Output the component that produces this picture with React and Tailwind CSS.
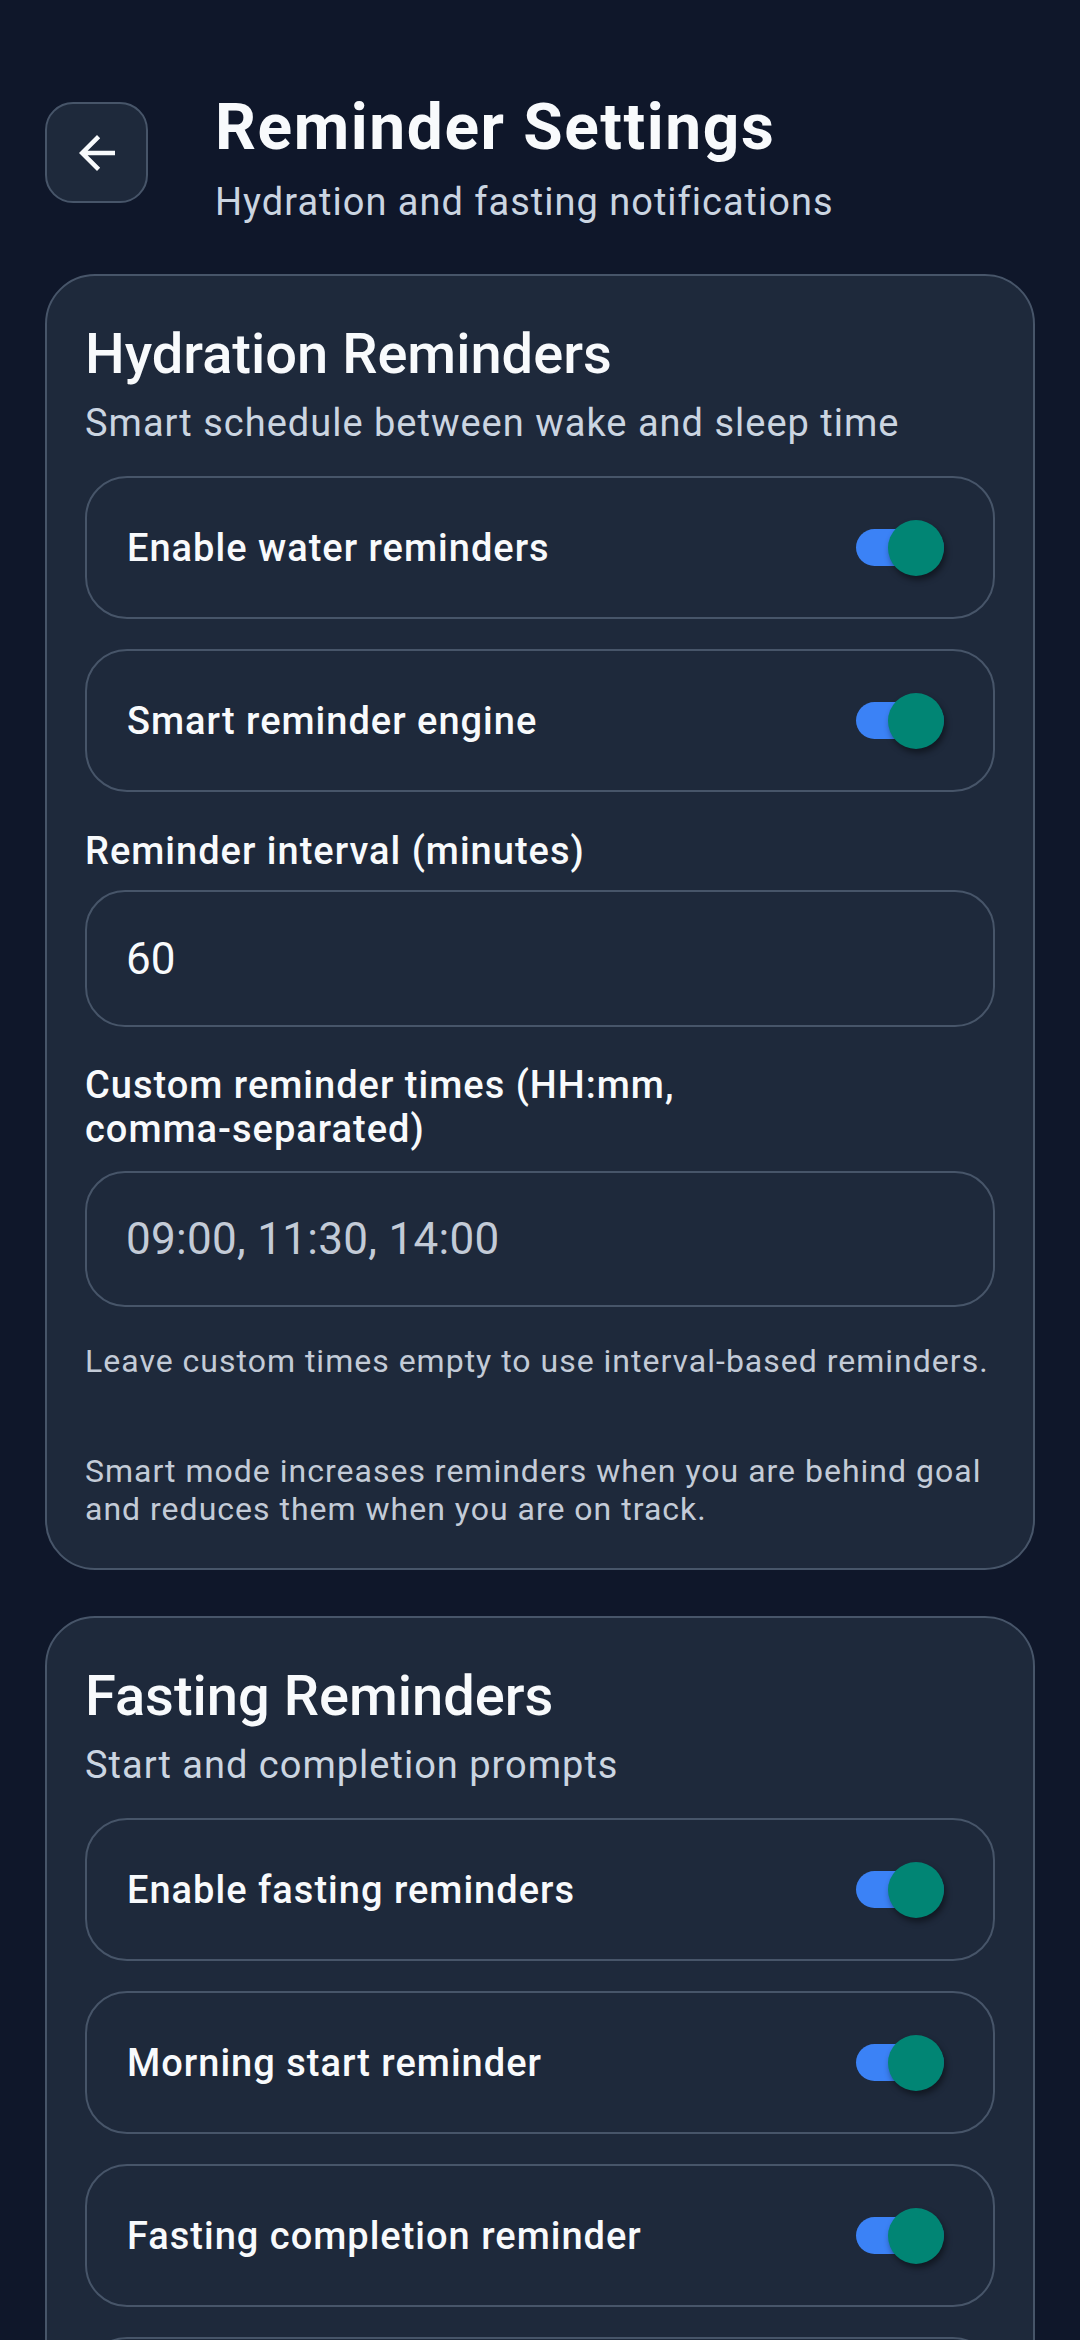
import React, { useState } from "react";

const ArrowBack = () => (
  <svg width="54" height="54" viewBox="0 0 24 24" fill="#f8fafc">
    <path d="M20 11H7.83l5.59-5.59L12 4l-8 8 8 8 1.41-1.41L7.83 13H20v-2z" />
  </svg>
);

const Toggle = ({ on, onChange }) => {
  return (
    <button
      onClick={() => onChange(!on)}
      className="relative w-[88px] h-[56px] flex items-center shrink-0"
    >
      <span
        className={
          on
            ? "block w-[88px] h-[37px] rounded-full bg-[#3b82f6]"
            : "block w-[88px] h-[37px] rounded-full bg-[#475569]"
        }
      />
      <span
        className={
          on
            ? "absolute right-0 top-0 w-[56px] h-[56px] rounded-full bg-[#018574] shadow-[2px_4px_6px_rgba(0,0,0,0.45)]"
            : "absolute left-0 top-0 w-[56px] h-[56px] rounded-full bg-[#e2e8f0] shadow-[2px_4px_6px_rgba(0,0,0,0.45)]"
        }
      />
    </button>
  );
};

const ToggleRow = ({ label, on, onChange }) => {
  return (
    <div className="h-[143px] rounded-[42px] border-2 border-[#475569] flex items-center justify-between pl-[40px] pr-[49px]">
      <p className="text-[38px] leading-[48px] tracking-[1px] font-medium text-[#f8fafc]">{label}</p>
      <Toggle on={on} onChange={onChange} />
    </div>
  );
};

const CardHeader = ({ title, subtitle }) => (
  <>
    <h2 className="text-[56px] leading-[68px] font-medium text-[#f8fafc]">{title}</h2>
    <p className="mt-[11px] text-[38px] leading-[48px] tracking-[1px] text-[#cbd5e1]">{subtitle}</p>
  </>
);

const App = () => {
  const [water, setWater] = useState(true);
  const [smart, setSmart] = useState(true);
  const [interval, setInterval] = useState("60");
  const [times, setTimes] = useState("");
  const [fasting, setFasting] = useState(true);
  const [morning, setMorning] = useState(true);
  const [completion, setCompletion] = useState(true);
  const [windowEnd, setWindowEnd] = useState(true);

  return (
    <div className="w-[1080px] h-[2340px] overflow-hidden bg-[#0f172a] font-['Roboto',sans-serif] px-[45px] pt-[90px]">
      {/* top bar */}
      <div className="flex items-start">
        <button className="mt-[12px] w-[103px] h-[101px] rounded-[28px] border-2 border-[#475569] bg-[#1e293b] flex items-center justify-center shrink-0">
          <ArrowBack />
        </button>
        <div className="ml-[67px]">
          <h1 className="text-[64px] leading-[76px] tracking-[1.6px] font-bold text-[#f8fafc]">Reminder Settings</h1>
          <p className="mt-[12px] text-[38px] leading-[48px] tracking-[1px] text-[#cbd5e1]">
            Hydration and fasting notifications
          </p>
        </div>
      </div>

      {/* hydration */}
      <section className="mt-[48px] rounded-[50px] border-2 border-[#475569] bg-[#1e293b] px-[38px] pt-[44px] pb-[40px]">
        <CardHeader
          title="Hydration Reminders"
          subtitle="Smart schedule between wake and sleep time"
        />
        <div className="mt-[29px] flex flex-col gap-[30px]">
          <ToggleRow label="Enable water reminders" on={water} onChange={setWater} />
          <ToggleRow label="Smart reminder engine" on={smart} onChange={setSmart} />
        </div>

        <label className="block mt-[37px] text-[38px] leading-[44px] tracking-[1px] font-medium text-[#f8fafc]">
          Reminder interval (minutes)
        </label>
        <input
          value={interval}
          onChange={(e) => setInterval(e.target.value)}
          className="mt-[17px] w-full h-[137px] rounded-[40px] border-2 border-[#475569] bg-transparent px-[39px] text-[44px] text-[#f8fafc] outline-none"
        />

        <label className="block mt-[36px] text-[38px] leading-[44px] tracking-[1px] font-medium text-[#f8fafc]">
          Custom reminder times (HH:mm, <span className="whitespace-nowrap">comma-separated)</span>
        </label>
        <input
          value={times}
          onChange={(e) => setTimes(e.target.value)}
          placeholder="09:00, 11:30, 14:00"
          className="mt-[20px] w-full h-[136px] rounded-[40px] border-2 border-[#475569] bg-transparent px-[39px] text-[44px] tracking-[0.3px] text-[#f8fafc] placeholder:text-[#c3cbd7] outline-none"
        />

        <p className="mt-[34px] text-[32px] leading-[40px] tracking-[1px] text-[#c3cbd7]">
          Leave custom times empty to use interval-based reminders.
        </p>
        <p className="mt-[71px] text-[32px] leading-[38px] tracking-[1px] text-[#c3cbd7]">
          Smart mode increases reminders when you are behind goal and reduces them when you are on track.
        </p>
      </section>

      {/* fasting */}
      <section className="mt-[46px] rounded-[50px] border-2 border-[#475569] bg-[#1e293b] px-[38px] pt-[44px] pb-[39px]">
        <CardHeader title="Fasting Reminders" subtitle="Start and completion prompts" />
        <div className="mt-[29px] flex flex-col gap-[30px]">
          <ToggleRow label="Enable fasting reminders" on={fasting} onChange={setFasting} />
          <ToggleRow label="Morning start reminder" on={morning} onChange={setMorning} />
          <ToggleRow label="Fasting completion reminder" on={completion} onChange={setCompletion} />
          <ToggleRow label="Eating window reminder" on={windowEnd} onChange={setWindowEnd} />
        </div>
      </section>
    </div>
  );
};

export default App;
